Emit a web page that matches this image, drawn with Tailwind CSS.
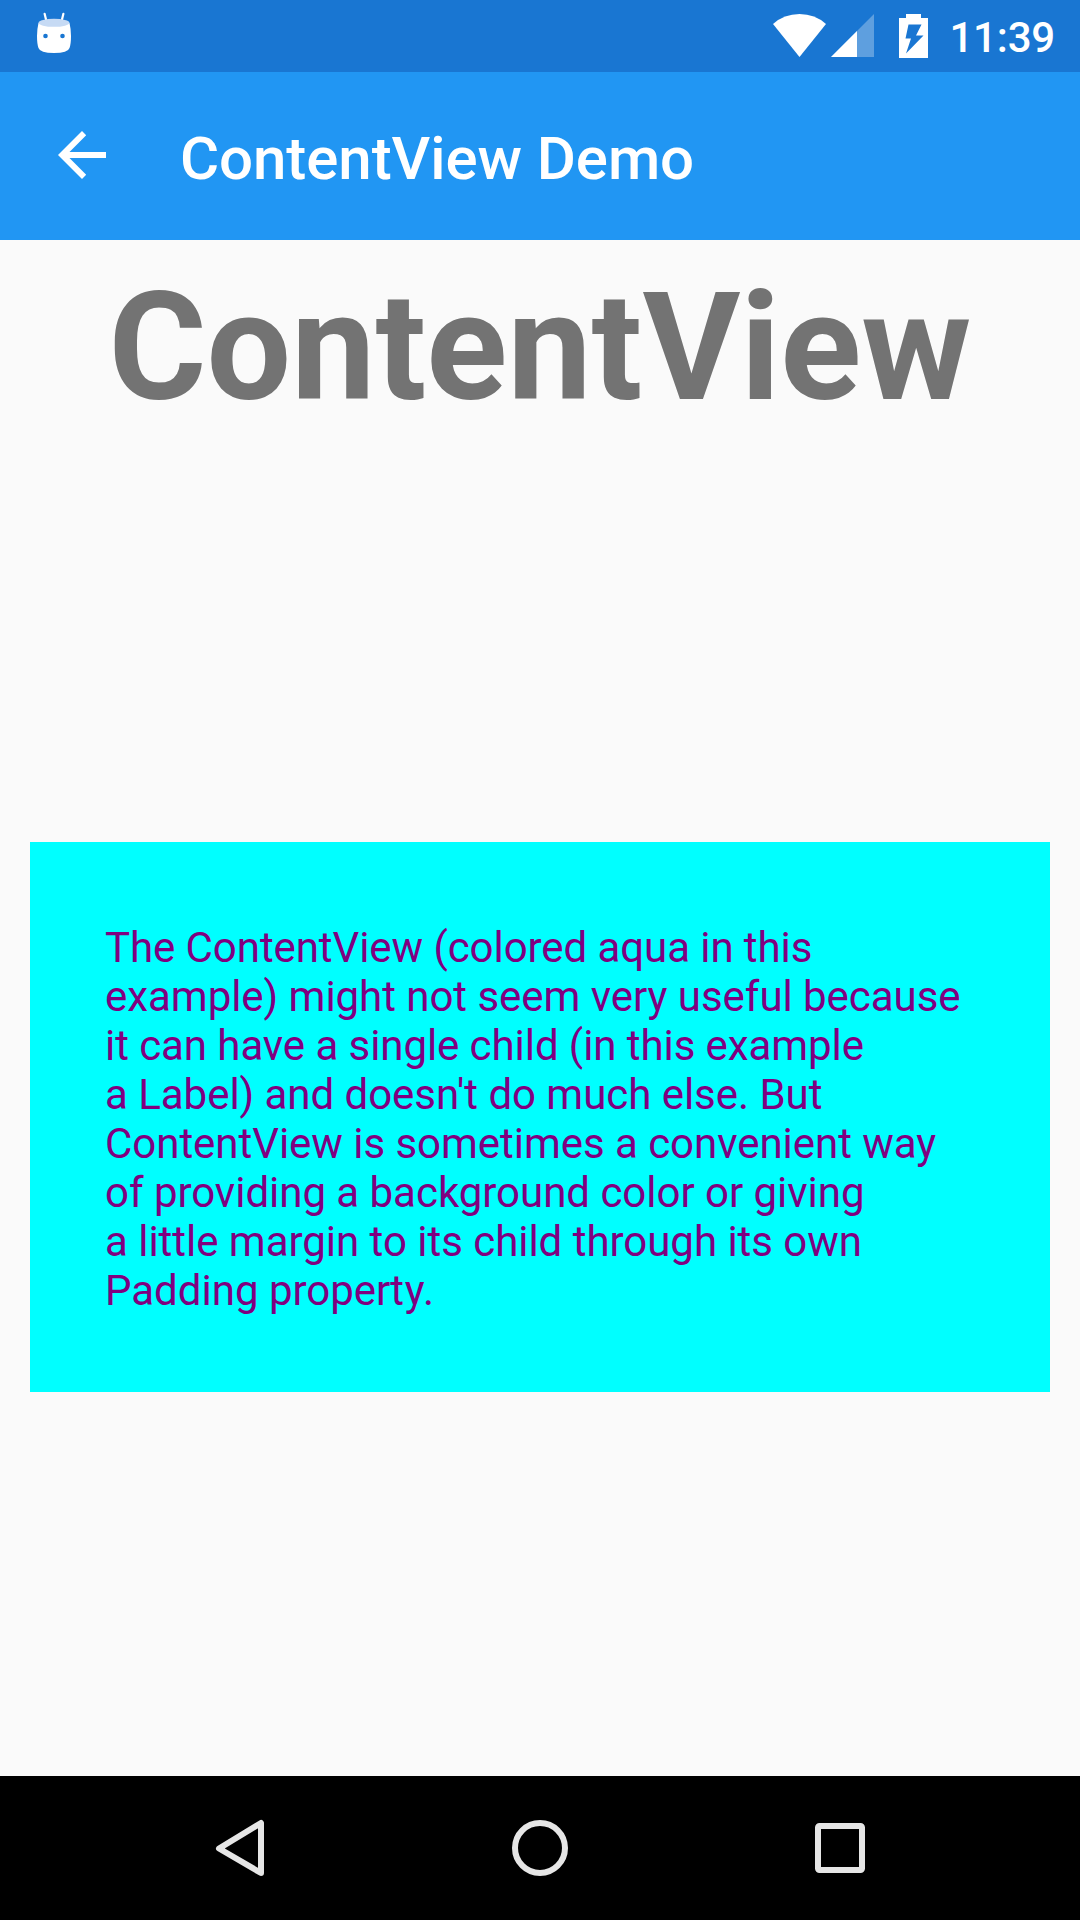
<!DOCTYPE html>
<html lang="en">
<head>
<meta charset="utf-8">
<title>ContentView Demo</title>
<script src="https://cdn.jsdelivr.net/npm/@tailwindcss/browser@4"></script>
</head>
<body class="bg-[#fafafa]">
<div class="flex h-[1920px] w-[1080px] flex-col overflow-hidden bg-[#fafafa] font-['Roboto',sans-serif]">
  <!-- Status bar -->
  <div class="flex h-[72px] shrink-0 items-start bg-[#1976d2] text-white">
    <svg class="ml-[36px] h-[72px] w-[36px]" viewBox="36 0 36 72">
      <path d="M44.6 13.8L46.6 22M63.4 13.8L61.4 22" stroke="#fff" stroke-width="2.2" stroke-linecap="round"/>
      <path d="M38.5 23Q37 29 37 36Q37 44 38.5 48Q40 53 54 53Q68 53 69.500 48Q71 44 71 36Q71 29 69.500 23Z" fill="#fff"/>
      <ellipse cx="54" cy="22.800" rx="15.500" ry="4" fill="#c6daf4"/>
      <circle cx="45.500" cy="36" r="2.300" fill="#1976d2"/><circle cx="62.500" cy="36" r="2.300" fill="#1976d2"/>
    </svg>
    <div class="ml-auto flex">
      <svg class="h-[72px] w-[54px]" viewBox="773 0 54 72"><path d="M773 24Q784 14 799.500 14Q815 14 826 24L799.500 57Z" fill="#fff"/></svg>
      <svg class="ml-[4px] h-[72px] w-[43px]" viewBox="831 0 43 72"><path d="M874 14V57H831Z" fill="#fff" fill-opacity=".3"/><path d="M857 31V57H831Z" fill="#fff"/></svg>
      <svg class="ml-[25px] h-[72px] w-[29px]" viewBox="899 0 29 72"><path fill-rule="evenodd" d="M906 14H921V18H928V58H899V18H906ZM908.500 24.500L905.500 38.500H911L906 53.500L923.500 35.500H916L921.500 24.500Z" fill="#fff"/></svg>
    </div>
    <div class="mr-[25px] ml-[21px] pt-[13px] text-[42px] leading-[49px] font-medium tracking-[-0.2px]">11:39</div>
  </div>
  <!-- App bar -->
  <div class="flex h-[168px] shrink-0 items-start bg-[#2196f3] text-white">
    <svg class="ml-[46px] h-[168px] w-[72px]" viewBox="0 -53 72 168"><g transform="translate(0,-6)"><path d="M60 33H23.500L40.200 16.200L36 12L12 36L36 60L40.200 55.800L23.500 39H60Z" fill="#fff"/></g></svg>
    <h1 class="ml-[62px] pt-[52px] text-[60px] leading-[70px] font-medium tracking-[-0.08px] whitespace-nowrap">ContentView Demo</h1>
  </div>
  <!-- Page content -->
  <main class="flex flex-1 flex-col px-[30px] pt-[20px]">
    <h2 class="text-center text-[150px] leading-[176px] font-bold tracking-[0.08px] text-[#737373]">ContentView</h2>
    <div class="mt-[406px] flex h-[550px] flex-col bg-[#00ffff] px-[75px] pt-[81px] text-[42px] leading-[49px] whitespace-nowrap text-[#800080]">
      <p class="tracking-[-0.07px]">The ContentView (colored aqua in this</p>
      <p class="tracking-[-0.035px]">example) might not seem very useful because</p>
      <p class="tracking-[-0.07px]">it can have a single child (in this example</p>
      <p class="tracking-[-0.035px]">a Label) and doesn't do much else. But</p>
      <p class="tracking-[-0.035px]">ContentView is sometimes a convenient way</p>
      <p class="tracking-[-0.025px]">of providing a background color or giving</p>
      <p class="tracking-[-0.025px]">a little margin to its child through its own</p>
      <p>Padding proper<span class="tracking-[0.6px]">ty.</span></p>
    </div>
  </main>
  <!-- Navigation bar -->
  <nav class="flex h-[144px] shrink-0 items-center justify-center gap-[240px] bg-black">
    <svg class="h-[60px] w-[60px]" viewBox="210 1818 60 60"><path d="M261 1823V1873L219 1848.500Z" fill="none" stroke="#e6e6e6" stroke-width="6" stroke-linejoin="round"/></svg>
    <svg class="h-[60px] w-[60px]" viewBox="510 1818 60 60"><circle cx="540" cy="1848" r="25" fill="none" stroke="#e6e6e6" stroke-width="6"/></svg>
    <svg class="h-[60px] w-[60px]" viewBox="810 1818 60 60"><rect x="818" y="1826" width="44" height="44" rx="1.500" fill="none" stroke="#e6e6e6" stroke-width="6"/></svg>
  </nav>
</div>
</body>
</html>
